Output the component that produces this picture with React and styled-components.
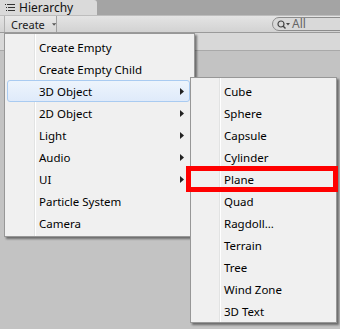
import React from "react";
import styled, { createGlobalStyle } from "styled-components";

const mainItems = [
  { label: "Create Empty" },
  { label: "Create Empty Child" },
  { label: "3D Object", sub: true, open: true },
  { label: "2D Object", sub: true },
  { label: "Light", sub: true },
  { label: "Audio", sub: true },
  { label: "UI", sub: true },
  { label: "Particle System" },
  { label: "Camera" }
];

const objectItems = [
  "Cube",
  "Sphere",
  "Capsule",
  "Cylinder",
  "Plane",
  "Quad",
  "Ragdoll...",
  "Terrain",
  "Tree",
  "Wind Zone",
  "3D Text"
];

const App = () => {
  return (
    <>
      <GlobalStyle />
      <Window>
        <TabBar>
          <Tab>
            <ListIcon />
            Hierarchy
          </Tab>
        </TabBar>
        <Toolbar>
          <CreateButton>
            Create
            <SmallCaret />
          </CreateButton>
          <SearchField>
            <SearchIcon />
            <SearchText>All</SearchText>
          </SearchField>
        </Toolbar>
        <Content>
          <SceneRow />
          <Menu>
            {mainItems.map(item => (
              <MenuItem key={item.label} $active={item.open}>
                {item.label}
                {item.sub && <Arrow />}
                {item.open && (
                  <SubMenu>
                    {objectItems.map(label => (
                      <SubItem key={label} $marked={label === "Plane"}>
                        {label}
                      </SubItem>
                    ))}
                  </SubMenu>
                )}
              </MenuItem>
            ))}
          </Menu>
        </Content>
      </Window>
    </>
  );
};

const ListIcon = () => (
  <svg width="10" height="8" viewBox="0 0 10 8">
    <g fill="#333">
      <rect x="0" y="0" width="1" height="1" />
      <rect x="2" y="0" width="8" height="1" />
      <rect x="1" y="3" width="1" height="1" />
      <rect x="3" y="3" width="7" height="1" />
      <rect x="1" y="6" width="1" height="1" />
      <rect x="3" y="6" width="7" height="1" />
    </g>
  </svg>
);

const SmallCaret = () => (
  <svg width="5" height="3" viewBox="0 0 5 3">
    <path d="M0 0h5L2.5 3z" fill="#555" />
  </svg>
);

const SearchIcon = () => (
  <svg width="14" height="9" viewBox="0 0 14 9">
    <circle cx="4" cy="4" r="3" fill="none" stroke="#444" strokeWidth="1.2" />
    <path d="M6 6l2.5 2.5" stroke="#444" strokeWidth="1.4" />
    <path d="M9 3h4l-2 2.5z" fill="#444" />
  </svg>
);

const Arrow = () => (
  <ArrowMark viewBox="0 0 4 7">
    <path d="M0 0l4 3.5L0 7z" />
  </ArrowMark>
);

const GlobalStyle = createGlobalStyle`
  html, body {
    margin: 0;
    padding: 0;
    background: #c3c3c3;
  }
  body {
    font-family: "Segoe UI", "Noto Sans", "Open Sans", sans-serif;
  }
`;

const Window = styled.div`
  width: 340px;
  height: 329px;
  overflow: hidden;
  background: #c3c3c3;
  display: flex;
  flex-direction: column;
`;

const TabBar = styled.div`
  height: 15px;
  background: #a4a4a4;
  display: flex;
  align-items: flex-end;
`;

const Tab = styled.div`
  width: 97px;
  height: 15px;
  box-sizing: border-box;
  padding-left: 5px;
  display: flex;
  align-items: center;
  gap: 4px;
  background: #dadada;
  border-top-right-radius: 3px;
  font-size: 12px;
  color: #111;
`;

const Toolbar = styled.div`
  height: 18px;
  box-sizing: border-box;
  padding: 1px 0 1px 4px;
  display: flex;
  align-items: center;
  justify-content: space-between;
  background: linear-gradient(#e4e4e4, #d2d2d2);
  border-top: 1px solid #bdbdbd;
  border-bottom: 1px solid #9a9a9a;
`;

const CreateButton = styled.div`
  width: 53px;
  height: 16px;
  box-sizing: border-box;
  padding-left: 6px;
  display: flex;
  align-items: center;
  gap: 7px;
  border-left: 1px solid #b0b0b0;
  border-right: 1px solid #a2a2a2;
  background: linear-gradient(#e9e9e9, #d6d6d6);
  font-size: 11px;
  color: #1a1a1a;
`;

const SearchField = styled.div`
  width: 75px;
  height: 14px;
  margin-right: -7px;
  box-sizing: border-box;
  padding-left: 4px;
  display: flex;
  align-items: center;
  gap: 1px;
  border: 1px solid #8c8c8c;
  border-radius: 7px 0 0 7px;
  background: #d9d9d9;
`;

const SearchText = styled.span`
  font-size: 12px;
  color: #666;
  line-height: 12px;
`;

const Content = styled.div`
  position: relative;
  flex: 1;
`;

const SceneRow = styled.div`
  height: 17px;
  background: #d8d8d8;
  border-bottom: 1px solid #a9a9a9;
`;

const Menu = styled.div`
  position: absolute;
  left: 4px;
  top: 0;
  width: 191px;
  box-sizing: border-box;
  padding: 2px 4px 2px 2px;
  border: 1px solid #979797;
  background: linear-gradient(
    to right,
    #f0f0f0 29px,
    #e2e3e3 29px,
    #e2e3e3 30px,
    #ffffff 30px,
    #ffffff 31px,
    #f0f0f0 31px
  );
  box-shadow: 2px 2px 2px rgba(0, 0, 0, 0.45);
`;

const MenuItem = styled.div`
  position: relative;
  height: 22px;
  box-sizing: border-box;
  padding-left: 31px;
  display: flex;
  align-items: center;
  font-size: 11.5px;
  color: #000;
  border: 1px solid ${({ $active }) => ($active ? "#a9cbf1" : "transparent")};
  border-radius: 3px;
  background: ${({ $active }) =>
    $active ? "linear-gradient(#edf4fc, #dfeafa)" : "transparent"};
`;

const ArrowMark = styled.svg`
  position: absolute;
  right: 5px;
  top: 7px;
  width: 4px;
  height: 7px;
  fill: #222;
`;

const SubMenu = styled.div`
  position: absolute;
  left: calc(100% + 1px);
  top: -4px;
  width: 147px;
  box-sizing: border-box;
  padding: 2px 0 0;
  border: 1px solid #979797;
  background: linear-gradient(
    to right,
    #f0f0f0 28px,
    #e2e3e3 28px,
    #e2e3e3 29px,
    #ffffff 29px,
    #ffffff 30px,
    #f0f0f0 30px
  );
  box-shadow: 2px 2px 2px rgba(0, 0, 0, 0.45);
`;

const SubItem = styled.div`
  position: relative;
  height: 22px;
  padding-left: 33px;
  display: flex;
  align-items: center;
  font-size: 11.5px;
  color: #000;

  ${({ $marked }) =>
    $marked &&
    `
    &::after {
      content: "";
      position: absolute;
      left: -5px;
      right: -2px;
      top: -2px;
      bottom: -2px;
      border: 5px solid #ff0000;
    }
  `}
`;

export default App;
